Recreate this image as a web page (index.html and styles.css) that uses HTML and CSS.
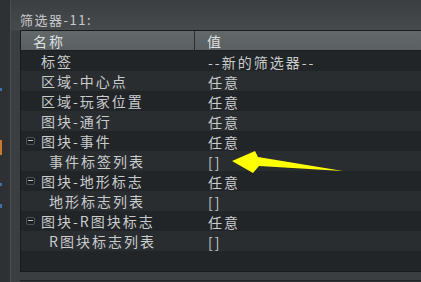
FILE: index.html
```html
<!DOCTYPE html>
<html lang="zh">

<head>
  <meta charset="UTF-8">
  <title>筛选器</title>
  <link rel="stylesheet" href="styles.css">
</head>

<body>
  <div class="app">
    <div class="side">
      <span class="mark blue m1"></span>
      <span class="mark orange m2"></span>
      <span class="mark blue m3"></span>
      <span class="mark blue m4"></span>
    </div>
    <div class="panel">
      <div class="title">筛选器-11:</div>
      <div class="grid">
        <div class="head">
          <div class="hname">名称</div>
          <div class="hvalue">值</div>
        </div>
        <div class="row">
          <div class="name"><span class="gap"></span>标签</div>
          <div class="value">--新的筛选器--</div>
        </div>
        <div class="row">
          <div class="name"><span class="gap"></span>区域-中心点</div>
          <div class="value">任意</div>
        </div>
        <div class="row">
          <div class="name"><span class="gap"></span>区域-玩家位置</div>
          <div class="value">任意</div>
        </div>
        <div class="row">
          <div class="name"><span class="gap"></span>图块-通行</div>
          <div class="value">任意</div>
        </div>
        <div class="row">
          <div class="name"><span class="toggle"></span>图块-事件</div>
          <div class="value">任意</div>
        </div>
        <div class="row">
          <div class="name child"><span class="gap"></span>事件标签列表</div>
          <div class="value">[]</div>
        </div>
        <div class="row">
          <div class="name"><span class="toggle"></span>图块-地形标志</div>
          <div class="value">任意</div>
        </div>
        <div class="row">
          <div class="name child"><span class="gap"></span>地形标志列表</div>
          <div class="value">[]</div>
        </div>
        <div class="row">
          <div class="name"><span class="toggle"></span>图块-R图块标志</div>
          <div class="value">任意</div>
        </div>
        <div class="row">
          <div class="name child"><span class="gap"></span>R图块标志列表</div>
          <div class="value">[]</div>
        </div>
      </div>
      <div class="next"></div>
    </div>
  </div>

  <!-- 标注箭头 -->
  <svg class="arrow" width="421" height="282" viewBox="0 0 421 282">
    <polygon points="232,161 255,151 258,157 343,171 259,166 253,173" fill="#ffff00" />
  </svg>
</body>

</html>
```

FILE: styles.css
```css
body {
  margin: 0;
  background: #3b3e41;
  font-family: "Noto Sans CJK SC", "Noto Sans", sans-serif;
  font-size: 14px;
  color: #c9cccd;
  overflow: hidden;
}

.app {
  display: flex;
  height: 282px;
}

.side {
  position: relative;
  width: 10px;
  background: #2e3033;
  border-right: 1px solid #4a4d50;
}

.mark {
  position: absolute;
  left: 0;
  width: 2px;
}

.blue {
  background: #3f6fa8;
}

.orange {
  background: #c9792c;
}

.m1 {
  top: 88px;
  height: 3px;
}

.m2 {
  top: 140px;
  height: 15px;
}

.m3 {
  top: 183px;
  height: 3px;
}

.m4 {
  top: 204px;
  height: 4px;
}

.panel {
  flex: 1;
  padding-left: 9px;
  background: linear-gradient(#3c3f42, #474a4d 30px, #3b3e41 31px);
}

.title {
  height: 30px;
  box-sizing: border-box;
  padding-top: 11px;
  line-height: 18px;
  font-size: 13px;
  letter-spacing: 1.5px;
  color: #c8cbcd;
}

.grid {
  height: 242px;
  box-sizing: border-box;
  border: 1px solid #191b1d;
  border-right: none;
  background: #222527;
}

.head {
  display: flex;
  height: 19px;
  border-bottom: 1px solid #1c1e20;
  background: linear-gradient(#63686b, #5a5f61);
  line-height: 20px;
  letter-spacing: 2px;
  color: #dde0e1;
}

.hname {
  width: 161px;
  padding-left: 12px;
  border-right: 1px solid #2a2c2e;
}

.hvalue {
  padding-left: 12px;
}

.row {
  display: flex;
  height: 20px;
  line-height: 22px;
  letter-spacing: 2px;
}

.row:nth-child(odd) {
  background: #2a2d30;
}

.name {
  display: flex;
  align-items: center;
  width: 169px;
  padding-left: 5px;
}

.name.child {
  padding-left: 13px;
  width: 161px;
}

.gap,
.toggle {
  flex: none;
  width: 9px;
  height: 8px;
  margin-right: 6px;
}

.toggle {
  position: relative;
  box-sizing: border-box;
  border: 1px solid #4f5356;
  border-radius: 2px;
  background: #1d1f21;
}

.toggle::after {
  content: "";
  position: absolute;
  left: 1px;
  right: 1px;
  top: 2px;
  height: 1px;
  background: #b9bcbe;
}

.value {
  padding-left: 13px;
}

.next {
  margin-top: 8px;
  border-top: 1px solid #1f2123;
  height: 2px;
  background: #33373a;
}

.arrow {
  position: absolute;
  left: 0;
  top: 0;
  pointer-events: none;
}
```
